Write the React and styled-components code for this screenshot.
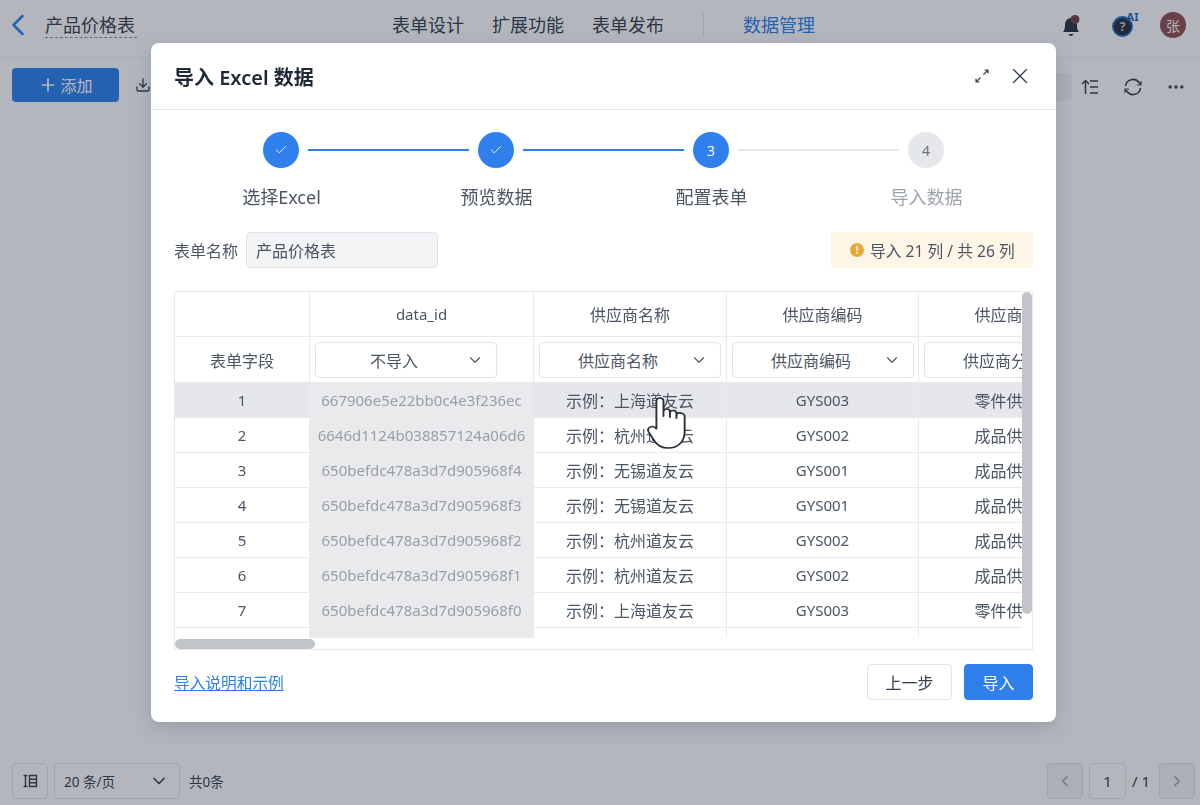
import React from 'react';
import styled, { createGlobalStyle } from 'styled-components';
import { X, ChevronDown, ChevronLeft, ChevronRight, Check, Plus, Download, Ellipsis } from 'lucide-react';

const GlobalStyle = createGlobalStyle`
  html, body {
    margin: 0;
    padding: 0;
    overflow: hidden;
    background: #fff;
    font-family: "Noto Sans", "Noto Sans CJK SC", sans-serif;
    color: #374151;
  }
  * { box-sizing: border-box; }
`;

const COLS = [135, 224, 193, 192, 192];

const ROWS = [
  ['667906e5e22bb0c4e3f236ec', '示例：上海道友云', 'GYS003', '零件供应商'],
  ['6646d1124b038857124a06d6', '示例：杭州道友云', 'GYS002', '成品供应商'],
  ['650befdc478a3d7d905968f4', '示例：无锡道友云', 'GYS001', '成品供应商'],
  ['650befdc478a3d7d905968f3', '示例：无锡道友云', 'GYS001', '成品供应商'],
  ['650befdc478a3d7d905968f2', '示例：杭州道友云', 'GYS002', '成品供应商'],
  ['650befdc478a3d7d905968f1', '示例：杭州道友云', 'GYS002', '成品供应商'],
  ['650befdc478a3d7d905968f0', '示例：上海道友云', 'GYS003', '零件供应商'],
];

const STEPS = [
  { label: '选择Excel', state: 'done' },
  { label: '预览数据', state: 'done' },
  { label: '配置表单', state: 'active' },
  { label: '导入数据', state: 'todo' },
];

const App = () => {
  return (
    <>
      <GlobalStyle />
      <Page>
        <TopBar>
          <BackLink>
            <ChevronLeft size={36} strokeWidth={1.7} />
          </BackLink>
          <AppTitle>产品价格表</AppTitle>
          <Nav>
            <NavItem>表单设计</NavItem>
            <NavItem>扩展功能</NavItem>
            <NavItem>表单发布</NavItem>
            <NavDivider />
            <NavItem $active>数据管理</NavItem>
          </Nav>
          <TopIcons>
            <BellIcon />
            <HelpIcon />
            <Avatar>张</Avatar>
          </TopIcons>
        </TopBar>
        <Toolbar>
          <AddButton>
            <Plus size={20} strokeWidth={2} />
            添加
          </AddButton>
          <ToolIcon>
            <Download size={16} />
          </ToolIcon>
          <ToolSpacer />
          <SearchBox />
          <ToolIcons>
            <SortIcon />
            <RefreshIcon />
            <Ellipsis size={20} strokeWidth={2} />
          </ToolIcons>
        </Toolbar>
        <PageFooter>
          <PagerBox $w={36}>
            <ColumnsIcon />
          </PagerBox>
          <SizeSelect>
            20 条/页
            <ChevronDown size={20} />
          </SizeSelect>
          <TotalText>共0条</TotalText>
          <FooterSpacer />
          <PagerBox $w={36} $disabled>
            <ChevronLeft size={18} />
          </PagerBox>
          <PagerBox $w={37}>1</PagerBox>
          <PageCount>/ 1</PageCount>
          <PagerBox $w={36} $disabled>
            <ChevronRight size={18} />
          </PagerBox>
        </PageFooter>
      </Page>

      <Mask>
        <Modal>
          <ModalHeader>
            <ModalTitle>导入 Excel 数据</ModalTitle>
            <HeaderActions>
              <ExpandIcon />
              <X size={26} strokeWidth={1.2} />
            </HeaderActions>
          </ModalHeader>
          <ModalBody>
            <StepTrack>
              {STEPS.map((s, i) => (
                <React.Fragment key={s.label}>
                  <StepCircle $state={s.state}>
                    {s.state === 'done' ? <Check size={14} strokeWidth={1.5} /> : i + 1}
                  </StepCircle>
                  {i < STEPS.length - 1 && <StepLine $on={s.state === 'done'} />}
                </React.Fragment>
              ))}
            </StepTrack>
            <StepLabels>
              {STEPS.map((s) => (
                <StepLabel key={s.label} $state={s.state}>
                  {s.label}
                </StepLabel>
              ))}
            </StepLabels>

            <FormRow>
              <FormLabel>表单名称</FormLabel>
              <NameInput>产品价格表</NameInput>
              <Notice>
                <NoticeDot>!</NoticeDot>
                导入 21 列 / 共 26 列
              </Notice>
            </FormRow>

            <TableWrap>
              <TableClip>
                <Row $h={45}>
                  <Cell $w={COLS[0]} />
                  <Cell $w={COLS[1]} $latin>data_id</Cell>
                  <Cell $w={COLS[2]}>供应商名称</Cell>
                  <Cell $w={COLS[3]}>供应商编码</Cell>
                  <Cell $w={COLS[4]}>供应商分类</Cell>
                </Row>
                <Row $h={46}>
                  <Cell $w={COLS[0]}>表单字段</Cell>
                  {['不导入', '供应商名称', '供应商编码', '供应商分类'].map((t, i) => (
                    <Cell $w={COLS[i + 1]} $start key={t}>
                      <FieldSelect>
                        <span>{t}</span>
                        <ChevronDown size={18} strokeWidth={1.5} />
                      </FieldSelect>
                    </Cell>
                  ))}
                </Row>
                {ROWS.map((r, i) => (
                  <Row $h={35} $hover={i === 0} key={r[0]}>
                    <Cell $w={COLS[0]} $latin>{i + 1}</Cell>
                    <Cell $w={COLS[1]} $ignored $latin>{r[0]}</Cell>
                    <Cell $w={COLS[2]}>{r[1]}</Cell>
                    <Cell $w={COLS[3]} $latin>{r[2]}</Cell>
                    <Cell $w={COLS[4]}>{r[3]}</Cell>
                  </Row>
                ))}
                <Row $h={35}>
                  <Cell $w={COLS[0]} />
                  <Cell $w={COLS[1]} $ignored />
                  <Cell $w={COLS[2]} />
                  <Cell $w={COLS[3]} />
                  <Cell $w={COLS[4]} />
                </Row>
              </TableClip>
              <VThumb />
              <HThumb />
              <HandCursor />
            </TableWrap>

            <ModalFooter>
              <HelpLink>导入说明和示例</HelpLink>
              <FooterButtons>
                <PrevButton>上一步</PrevButton>
                <ImportButton>导入</ImportButton>
              </FooterButtons>
            </ModalFooter>
          </ModalBody>
        </Modal>
      </Mask>
    </>
  );
};

const BellIcon = () => (
  <svg width="22" height="24" viewBox="0 0 22 24">
    <path d="M3 19c1.500-1.500 2-3.500 2-7 0-4 2.400-7 6-7s6 3 6 7c0 3.500.5 5.500 2 7z" fill="#2c3444" />
    <path d="M8.500 21a2.600 2.600 0 0 0 5 0z" fill="#2c3444" />
    <circle cx="15" cy="6.500" r="4.500" fill="#7c3f4c" />
  </svg>
);

const HelpIcon = () => (
  <svg width="30" height="30" viewBox="0 0 30 30">
    <circle cx="12.500" cy="16.500" r="9.500" fill="#2b3040" stroke="#2566bd" strokeWidth="1.800" />
    <text x="12.500" y="21" textAnchor="middle" fontSize="12" fontWeight="700" fill="#c4c7ce" fontFamily="Noto Sans, sans-serif">?</text>
    <text x="22.500" y="11" textAnchor="middle" fontSize="11" fontWeight="700" fill="#2566bd" fontFamily="Noto Sans, sans-serif">AI</text>
  </svg>
);

const SortIcon = () => (
  <svg width="20" height="20" viewBox="0 0 20 20" fill="none" stroke="#374151" strokeWidth="1.500">
    <path d="M5.500 17V3.500M2 7l3.500-3.500L9 7M10 4h8M10 10h8M10 16h8" />
  </svg>
);

const RefreshIcon = () => (
  <svg width="20" height="20" viewBox="0 0 20 20" fill="none" stroke="#374151" strokeWidth="1.600">
    <path d="M2.500 9a7.500 7.500 0 0 1 13.500-3.500L17.500 7.500" />
    <path d="M17.500 11a7.500 7.500 0 0 1-13.500 3.500L2.500 12.500" />
    <path d="M18 4v4h-4M2 16v-4h4" strokeWidth="1.200" />
  </svg>
);

const ColumnsIcon = () => (
  <svg width="16" height="16" viewBox="0 0 16 16" fill="none" stroke="#374151" strokeWidth="1.400">
    <path d="M1.500 2.500h4M3.500 2.500v11M1.500 13.500h4M7.500 2.500h7v11h-7zM7.500 6.200h7M7.500 9.800h7" />
  </svg>
);

const ExpandIcon = () => (
  <svg width="14" height="14" viewBox="0 0 14 14" fill="none" stroke="#374151" strokeWidth="1.200">
    <path d="M8.500 5.500 13 1M9.500 1H13v3.500M5.500 8.500 1 13M4.500 13H1V9.500" />
  </svg>
);

const HandCursor = () => (
  <HandSvg width="40" height="54" viewBox="0 0 34 56" preserveAspectRatio="none">
    <path
      d="M8 30V5.500C8 3.300 9.300 2 11 2s3 1.300 3 3.500V21V16.500c0-2 1.200-3 2.700-3s2.800 1 2.800 3V22v-4c0-2 1.200-3 2.700-3s2.800 1 2.800 3v5-2.500c0-2 1.100-3 2.500-3S32 18.500 32 20.500V37c0 10-5.500 17-14 17-6 0-9.500-3-12-8L1.500 37.500C.5 35.300 1 33 3 32c1.800-.9 3.700 0 5 2z"
      fill="#fff"
      stroke="#2b2f38"
      strokeWidth="1.600"
      strokeLinejoin="round"
    />
  </HandSvg>
);

const Page = styled.div`
  height: 805px;
  display: flex;
  flex-direction: column;
  background: #fff;
`;

const TopBar = styled.header`
  height: 58px;
  flex: none;
  display: flex;
  align-items: center;
  padding: 0 14px 8px 0;
  border-bottom: 1px solid #f0f1f3;
`;

const BackLink = styled.span`
  width: 45px;
  display: flex;
  color: #2f80ed;
`;

const AppTitle = styled.span`
  width: 92px;
  padding-top: 1px;
  font-size: 18px;
  line-height: 24px;
  color: #374151;
  border-bottom: 1px dashed #8b919c;
  white-space: nowrap;
`;

const Nav = styled.nav`
  display: flex;
  align-items: center;
  margin-left: 255px;
  gap: 28px;
`;

const NavItem = styled.span`
  font-size: 18px;
  line-height: 24px;
  white-space: nowrap;
  color: ${(p) => (p.$active ? '#2f80ed' : '#374151')};
`;

const NavDivider = styled.span`
  width: 1px;
  height: 24px;
  margin: 0 11px;
  background: #e2e4e9;
`;

const TopIcons = styled.div`
  margin-left: auto;
  display: flex;
  align-items: center;
  gap: 20px;

  svg:first-child {
    margin-right: 8px;
  }
`;

const Avatar = styled.span`
  width: 26px;
  height: 26px;
  border-radius: 50%;
  background: #944e52;
  color: #fff;
  font-size: 14px;
  display: flex;
  align-items: center;
  justify-content: center;
`;

const Toolbar = styled.div`
  height: 54px;
  flex: none;
  display: flex;
  align-items: center;
  padding: 0 12px;
`;

const AddButton = styled.button`
  width: 107px;
  height: 34px;
  border: 0;
  border-radius: 4px;
  background: #2f80ed;
  color: #fff;
  font: inherit;
  font-size: 16px;
  display: flex;
  align-items: center;
  justify-content: center;
  gap: 2px;
`;

const ToolIcon = styled.span`
  margin-left: 16px;
  display: flex;
  color: #374151;
`;

const ToolSpacer = styled.span`
  flex: 1;
`;

const SearchBox = styled.div`
  width: 200px;
  height: 28px;
  margin-top: 3px;
  border-radius: 4px;
  background: #f3f4f6;
`;

const ToolIcons = styled.div`
  display: flex;
  align-items: center;
  gap: 23px;
  margin: 3px 0 0 8px;
  width: 108px;
  color: #374151;
`;

const PageFooter = styled.footer`
  margin-top: auto;
  height: 36px;
  margin-bottom: 6px;
  padding: 0 5px 0 12px;
  display: flex;
  align-items: center;
  gap: 6px;
`;

const PagerBox = styled.span`
  width: ${(p) => p.$w}px;
  height: 36px;
  border: 1px solid ${(p) => (p.$disabled ? '#dfe1e6' : '#e1e3e8')};
  border-radius: 4px;
  display: flex;
  align-items: center;
  justify-content: center;
  font-size: 15px;
  color: ${(p) => (p.$disabled ? '#9ca3af' : '#374151')};
  background: ${(p) => (p.$disabled ? '#f3f4f6' : 'transparent')};
`;

const SizeSelect = styled.span`
  width: 126px;
  height: 36px;
  padding: 0 10px 0 9px;
  border: 1px solid #e1e3e8;
  border-radius: 4px;
  display: flex;
  align-items: center;
  justify-content: space-between;
  font-size: 13.500px;
  color: #374151;
`;

const TotalText = styled.span`
  margin-left: 3px;
  font-size: 13.500px;
  color: #374151;
`;

const FooterSpacer = styled.span`
  flex: 1;
`;

const PageCount = styled.span`
  width: 21px;
  font-size: 15px;
  color: #374151;
`;

const Mask = styled.div`
  position: fixed;
  inset: 0;
  background: rgba(20, 30, 50, 0.32);
  padding: 43px 0 0 151px;
`;

const Modal = styled.div`
  width: 905px;
  height: 679px;
  background: #fff;
  border-radius: 8px;
  box-shadow: 0 6px 20px rgba(30, 40, 60, 0.18);
  display: flex;
  flex-direction: column;
`;

const ModalHeader = styled.div`
  height: 67px;
  flex: none;
  padding: 0 23px;
  display: flex;
  align-items: center;
  justify-content: space-between;
  border-bottom: 1px solid #e5e7eb;
`;

const ModalTitle = styled.h2`
  margin: 0;
  font-size: 20px;
  font-weight: 600;
  color: #1f2937;
`;

const HeaderActions = styled.div`
  display: flex;
  align-items: center;
  gap: 18px;
  color: #374151;
`;

const ModalBody = styled.div`
  flex: 1;
  padding: 22px 23px 0;
  display: flex;
  flex-direction: column;
`;

const StepTrack = styled.div`
  display: flex;
  align-items: center;
  padding: 0 89px;
`;

const StepCircle = styled.span`
  width: 36px;
  height: 36px;
  flex: none;
  border-radius: 50%;
  display: flex;
  align-items: center;
  justify-content: center;
  font-size: 14px;
  background: ${(p) => (p.$state === 'todo' ? '#e5e7eb' : '#2f80ed')};
  color: ${(p) => (p.$state === 'todo' ? '#6b7280' : '#fff')};
`;

const StepLine = styled.span`
  flex: 1;
  height: 2px;
  margin: 0 9px;
  background: ${(p) => (p.$on ? '#2f80ed' : '#e5e7eb')};
`;

const StepLabels = styled.div`
  display: grid;
  grid-template-columns: repeat(4, 215px);
  margin-top: 16px;
  height: 26px;
`;

const StepLabel = styled.span`
  font-size: 18px;
  line-height: 26px;
  text-align: center;
  color: ${(p) => (p.$state === 'todo' ? '#9ca3af' : '#4b5563')};
`;

const FormRow = styled.div`
  height: 36px;
  margin-top: 22px;
  display: flex;
  align-items: center;
`;

const FormLabel = styled.span`
  width: 72px;
  font-size: 16px;
  color: #4b5563;
`;

const NameInput = styled.div`
  width: 192px;
  height: 36px;
  padding: 0 9px;
  display: flex;
  align-items: center;
  font-size: 16px;
  color: #4b5563;
  background: #f3f4f6;
  border: 1px solid #e1e3e8;
  border-radius: 4px;
`;

const Notice = styled.div`
  margin-left: auto;
  width: 202px;
  height: 36px;
  padding-left: 19px;
  display: flex;
  align-items: center;
  gap: 6px;
  font-size: 15.700px;
  color: #4b5563;
  background: #fdf6e7;
  border-radius: 2px;
  white-space: nowrap;
`;

const NoticeDot = styled.span`
  width: 14px;
  height: 14px;
  flex: none;
  border-radius: 50%;
  background: #e6a935;
  color: #fff;
  font-size: 10px;
  font-weight: 700;
  line-height: 14px;
  text-align: center;
`;

const TableWrap = styled.div`
  position: relative;
  margin-top: 23px;
  height: 359px;
  border: 1px solid #e8eaed;
  padding: 0 10px 11px 0;
`;

const TableClip = styled.div`
  width: 100%;
  height: 100%;
  overflow: hidden;
`;

const Row = styled.div`
  display: flex;
  height: ${(p) => p.$h}px;
  width: max-content;
  border-bottom: 1px solid #e8eaed;
  background: ${(p) => (p.$hover ? '#e5e7eb' : 'transparent')};
`;

const Cell = styled.div`
  width: ${(p) => p.$w}px;
  flex: none;
  padding: 0 5px;
  display: flex;
  align-items: center;
  justify-content: ${(p) => (p.$start ? 'flex-start' : 'center')};
  border-right: 1px solid #e8eaed;
  font-size: ${(p) => (p.$latin ? 15 : 16)}px;
  white-space: nowrap;
  color: ${(p) => (p.$ignored ? '#9a9ea7' : '#4b5563')};
  background: ${(p) => (p.$ignored ? '#e9eaec' : 'transparent')};
`;

const FieldSelect = styled.div`
  width: 182px;
  height: 36px;
  flex: none;
  padding: 0 12px 0 10px;
  border: 1px solid #e1e3e8;
  border-radius: 4px;
  background: #fff;
  display: flex;
  align-items: center;
  color: #4b5563;

  span {
    flex: 1;
    text-align: center;
    padding-right: 4px;
  }
  svg {
    flex: none;
  }
`;

const VThumb = styled.div`
  position: absolute;
  top: 0;
  right: 0;
  width: 10px;
  height: 322px;
  border-radius: 5px;
  background: #c1c4c9;
`;

const HThumb = styled.div`
  position: absolute;
  left: 0;
  bottom: 0;
  width: 140px;
  height: 10px;
  border-radius: 5px;
  background: #c1c4c9;
`;

const HandSvg = styled.svg`
  position: absolute;
  left: 472px;
  top: 104px;
`;

const ModalFooter = styled.div`
  margin-top: 14px;
  display: flex;
  align-items: center;
  justify-content: space-between;
`;

const HelpLink = styled.a`
  font-size: 15.700px;
  color: #2f80ed;
  text-decoration: underline;
`;

const FooterButtons = styled.div`
  display: flex;
  gap: 12px;
`;

const PrevButton = styled.button`
  width: 85px;
  height: 36px;
  border: 1px solid #e1e3e8;
  border-radius: 4px;
  background: #fff;
  font: inherit;
  font-size: 16px;
  color: #374151;
`;

const ImportButton = styled(PrevButton)`
  width: 69px;
  border-color: #2f80ed;
  background: #2f80ed;
  color: #fff;
`;

export default App;
